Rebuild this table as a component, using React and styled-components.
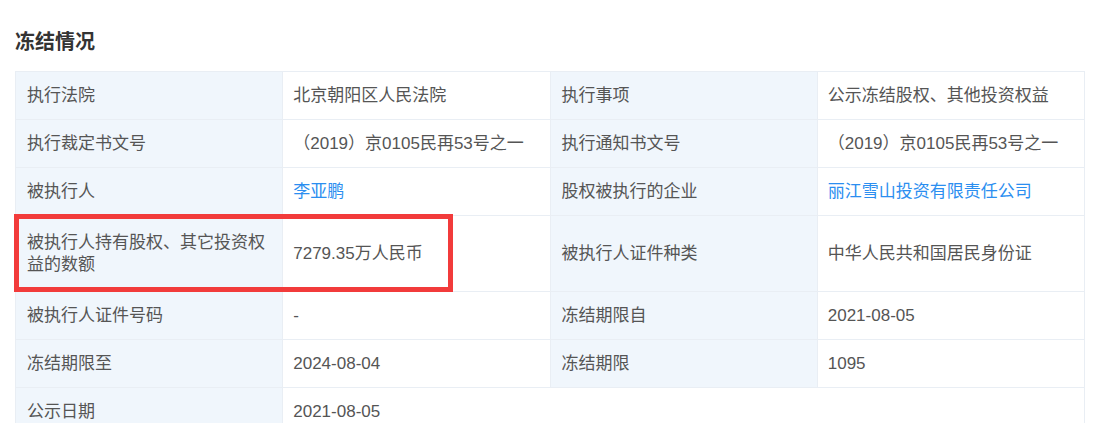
import React from 'react'
import styled, { createGlobalStyle } from 'styled-components'

const GlobalStyle = createGlobalStyle`
    html, body {
        margin: 0;
        padding: 0;
        background: #fff;
    }
    body {
        font-family: "Liberation Sans", "Noto Sans CJK SC", sans-serif;
        overflow: hidden;
    }
`

const rows = [
    [
        { label: '执行法院', value: '北京朝阳区人民法院' },
        { label: '执行事项', value: '公示冻结股权、其他投资权益' },
    ],
    [
        { label: '执行裁定书文号', value: '（2019）京0105民再53号之一' },
        { label: '执行通知书文号', value: '（2019）京0105民再53号之一' },
    ],
    [
        { label: '被执行人', value: '李亚鹏', link: true },
        { label: '股权被执行的企业', value: '丽江雪山投资有限责任公司', link: true },
    ],
    [
        { label: '被执行人持有股权、其它投资权益的数额', value: '7279.35万人民币', marked: true },
        { label: '被执行人证件种类', value: '中华人民共和国居民身份证' },
    ],
    [
        { label: '被执行人证件号码', value: '-' },
        { label: '冻结期限自', value: '2021-08-05' },
    ],
    [
        { label: '冻结期限至', value: '2024-08-04' },
        { label: '冻结期限', value: '1095' },
    ],
    [
        { label: '公示日期', value: '2021-08-05' },
    ],
]

function App() {
    return (
        <Page>
            <GlobalStyle />
            <Title>冻结情况</Title>
            <Table>
                {rows.map((row, i) => (
                    <React.Fragment key={i}>
                        {row.map((cell, j) => (
                            <React.Fragment key={j}>
                                <Label tall={cell.marked}>
                                    {cell.label}
                                    {cell.marked && <Mark />}
                                </Label>
                                <Value link={cell.link} wide={row.length === 1}>
                                    {cell.value}
                                </Value>
                            </React.Fragment>
                        ))}
                    </React.Fragment>
                ))}
            </Table>
        </Page>
    )
}

export default App

const Page = styled.div`
    height: 423px;
    overflow: hidden;
    padding: 0 20px 0 15px;
    box-sizing: border-box;
`

const Title = styled.h2`
    margin: 0;
    padding-top: 28px;
    font-size: 20px;
    line-height: 28px;
    font-weight: 700;
    color: #333;
    letter-spacing: 0;
`

const Table = styled.div`
    margin-top: 15px;
    display: grid;
    grid-template-columns: repeat(4, 1fr);
    border-top: 1px solid #e9eef4;
    border-left: 1px solid #e9eef4;
    width: 1069px;
`

const Cell = styled.div`
    display: flex;
    align-items: center;
    box-sizing: border-box;
    min-height: 48px;
    padding: 0 10px 0 11px;
    font-size: 17px;
    line-height: 22px;
    color: #555;
    border-right: 1px solid #e9eef4;
    border-bottom: 1px solid #e9eef4;
`

const Label = styled(Cell)`
    position: relative;
    background: #f0f6fc;
    min-height: ${props => props.tall ? '76px' : '48px'};
`

const Value = styled(Cell)`
    background: #fff;
    color: ${props => props.link ? '#2b8ef0' : '#555'};
    grid-column: ${props => props.wide ? 'span 3' : 'auto'};
    padding-left: 10px;
`

const Mark = styled.div`
    position: absolute;
    left: -2px;
    top: -2px;
    width: 439px;
    height: 78px;
    box-sizing: border-box;
    border: 5px solid #f23b3b;
    pointer-events: none;
`
